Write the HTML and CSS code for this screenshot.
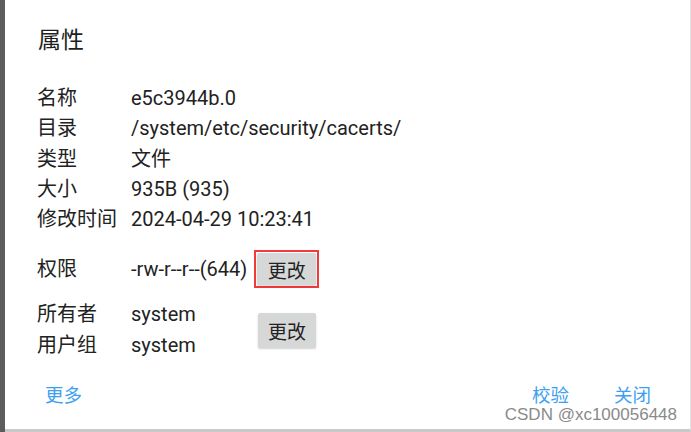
FILE: index.html
```html
<!DOCTYPE html>
<html lang="zh">
<head>
	<meta charset=utf-8>
	<meta name="viewport" content="width=device-width, initial-scale=1.0">
	<link rel="stylesheet" href="styles.css">
	<title>属性</title>
</head>
<body>
	<div class=edge></div>
	<div class=dialog>
		<h1 class=title>属性</h1>
		<div class=info>
			<div class=row><span class=label>名称</span><span class=value>e5c3944b.0</span></div>
			<div class=row><span class=label>目录</span><span class=value>/system/etc/security/cacerts/</span></div>
			<div class=row><span class=label>类型</span><span class=value>文件</span></div>
			<div class=row><span class=label>大小</span><span class=value>935B (935)</span></div>
			<div class=row><span class=label>修改时间</span><span class=value>2024-04-29 10:23:41</span></div>
		</div>
		<div class="row perm">
			<span class=label>权限</span><span class=value>-rw-r--r--(644)</span>
			<span class=mark><button class=btn>更改</button></span>
		</div>
		<div class=owner>
			<div class=owner-rows>
				<div class=row><span class=label>所有者</span><span class=value>system</span></div>
				<div class=row><span class=label>用户组</span><span class=value>system</span></div>
			</div>
			<button class=btn>更改</button>
		</div>
		<div class=actions>
			<a class=link>更多</a>
			<span class=spacer></span>
			<a class=link>校验</a>
			<a class=link>关闭</a>
		</div>
		<div class=watermark>CSDN @xc100056448</div>
	</div>
</body>
</html>
```

FILE: styles.css
```css
body {
	margin: 0;
	display: flex;
	height: 432px;
	overflow: hidden;
	font-family: Roboto, "Noto Sans CJK SC", sans-serif;
	color: #222;
	background: #fff;
}
.edge {
	width: 5px;
	background: #5c5c5c;
	flex: none;
}
.dialog {
	position: relative;
	flex: 1;
	padding: 0 0 0 32px;
	border-bottom: 3px solid #c9c9c9;
	border-right: 1px solid #e2e2e2;
	box-sizing: border-box;
}
.title {
	margin: 25px 0 0 1px;
	font-size: 23px;
	font-weight: normal;
	line-height: 32px;
	color: #1e1e1e;
}
.info {
	margin-top: 26px;
}
.row {
	display: flex;
	align-items: center;
	font-size: 20px;
	line-height: 30.3px;
	white-space: nowrap;
}
.label {
	min-width: 91px;
	margin-right: 3px;
}
.perm {
	margin-top: 16px;
	height: 38px;
}
.mark {
	margin-left: 7px;
	border: 2px solid #f23a3a;
	padding: 1px;
	display: flex;
}
.btn {
	font-family: Roboto, "Noto Sans CJK SC", sans-serif;
	font-size: 19px;
	color: #222;
	background: #d6d7d7;
	border: none;
	border-radius: 2px;
	padding: 0;
	width: 59px;
	height: 32px;
	box-shadow: 0 1px 2px rgba(0, 0, 0, .18);
}
.owner {
	display: flex;
	align-items: center;
	margin-top: 11px;
}
.owner-rows {
	width: 221px;
}
.owner .btn {
	width: 58px;
	height: 35px;
	margin-top: 1px;
}
.actions {
	display: flex;
	align-items: center;
	margin: 21px 0 0 8px;
	padding-right: 39px;
}
.link {
	font-size: 18.5px;
	color: #3e9ff0;
}
.spacer {
	flex: 1;
}
.actions .link + .link {
	margin-left: 45px;
}
.watermark {
	position: absolute;
	right: 13px;
	bottom: 4px;
	font-family: "Liberation Sans", sans-serif;
	font-size: 17px;
	line-height: 20px;
	color: #8a8a8a;
}
```
